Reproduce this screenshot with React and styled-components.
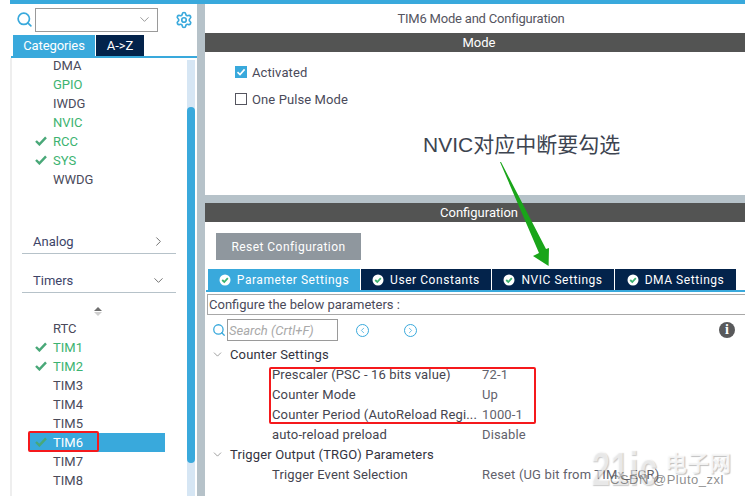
import React from 'react';
import styled, { createGlobalStyle } from 'styled-components';
import { Search, Settings, ChevronDown, ChevronRight, ChevronLeft } from 'lucide-react';

const blue = '#39a9dc';
const navy = '#03234b';
const steel = '#b6c2c9';
const green = '#3cb371';
const ink = '#4a4a5a';

const GlobalStyle = createGlobalStyle`
    html, body {
        margin: 0;
        padding: 0;
        background: #ffffff;
    }
    body {
        width: 745px;
        height: 496px;
        overflow: hidden;
        font-family: Roboto, "Liberation Sans", "Noto Sans CJK SC", sans-serif;
        font-size: 13px;
        color: ${ink};
    }
`;

const Page = styled.div`
    position: relative;
    width: 745px;
    height: 496px;
    overflow: hidden;
    padding-left: 10px;
    box-sizing: border-box;
`;

const TopBar = styled.div`
    height: 4px;
    background: ${blue};
`;

const Columns = styled.div`
    display: flex;
    height: 492px;
`;

const Sidebar = styled.aside`
    width: 187px;
    flex: none;
    display: flex;
    flex-direction: column;
`;

const SearchRow = styled.div`
    display: flex;
    align-items: center;
    height: 31px;
    padding-left: 6px;
    box-sizing: border-box;
    color: ${blue};
`;

const Combo = styled.div`
    width: 123px;
    height: 24px;
    margin-left: 2px;
    box-sizing: border-box;
    border: 1px solid #9a9a9a;
    display: flex;
    align-items: center;
    justify-content: flex-end;
    padding-right: 5px;
    color: #8c8c8c;
`;

const GearSlot = styled.div`
    margin-left: 17px;
    display: flex;
`;

const Tabs = styled.div`
    display: flex;
    gap: ${(p) => p.$gap}px;
    padding-left: ${(p) => p.$inset}px;
    border-bottom: 2px solid ${blue};
    margin-left: 1px;
`;

const SideTab = styled.div`
    height: 21px;
    width: ${(p) => p.$width}px;
    display: flex;
    align-items: center;
    justify-content: center;
    background: ${(p) => (p.$active ? blue : navy)};
    color: #ffffff;
    font-size: 13px;
    letter-spacing: -0.1px;
`;

const SideBody = styled.div`
    flex: 1;
    display: flex;
    min-height: 0;
    border-left: 2px solid #eeeeee;
`;

const SideList = styled.div`
    flex: 1;
    overflow: hidden;
`;

const Scrollbar = styled.div`
    position: relative;
    width: 8px;
    margin: 2px 2px 0 0;
    background: #d6e6f4;
`;

const ScrollThumb = styled.div`
    position: absolute;
    top: 47px;
    left: 0;
    right: 0;
    height: 356px;
    background: ${blue};
    border-radius: 4px;
`;

const ItemGroup = styled.div`
    padding-left: 18px;
    margin-top: ${(p) => p.$top || 0}px;
`;

const Item = styled.div`
    position: relative;
    height: 19px;
    width: 135px;
    display: flex;
    align-items: center;
    padding-left: 23px;
    box-sizing: border-box;
    font-size: 13px;
    color: ${(p) => (p.$selected ? '#ffffff' : p.$on ? green : ink)};
    background: ${(p) => (p.$selected ? blue : 'transparent')};
`;

const ItemCheck = styled.svg`
    position: absolute;
    left: 5px;
    top: 4px;
    width: 12px;
    height: 10px;
`;

const RedMark = styled.div`
    position: absolute;
    left: -2px;
    top: -2px;
    width: 71px;
    height: 21px;
    box-sizing: border-box;
    border: 2.5px solid #f5191c;
    border-radius: 2px;
`;

const Section = styled.div`
    display: flex;
    align-items: center;
    justify-content: space-between;
    width: 154px;
    height: 21px;
    box-sizing: border-box;
    margin: ${(p) => p.$top}px 0 0 10px;
    padding: 0 10px 3px 11px;
    border-bottom: 1px solid ${steel};
    font-size: 13px;
    color: #3d4468;
`;

const SortArrows = styled.div`
    width: 135px;
    height: 16px;
    margin: 10px 0 0 18px;
    display: flex;
    flex-direction: column;
    align-items: center;
    justify-content: center;
    gap: 1px;
    &::before, &::after {
        content: '';
        width: 0;
        height: 0;
        border-left: 4px solid transparent;
        border-right: 4px solid transparent;
    }
    &::before { border-bottom: 4px solid #6f6f6f; }
    &::after { border-top: 4px solid #cfcfcf; }
`;

const Gutter = styled.div`
    width: 8px;
    flex: none;
    background: ${steel};
`;

const Main = styled.main`
    flex: none;
    width: 548px;
    display: flex;
    flex-direction: column;
    background: ${steel};
`;

const Pane = styled.section`
    background: #ffffff;
    height: ${(p) => p.$height}px;
    margin-bottom: ${(p) => p.$gap || 0}px;
    flex: ${(p) => (p.$grow ? 1 : 'none')};
`;

const PaneTitle = styled.div`
    height: 29px;
    display: flex;
    align-items: center;
    justify-content: center;
    padding-left: 4px;
    font-size: 13px;
    letter-spacing: -0.2px;
    color: #55555f;
`;

const Band = styled.div`
    height: 19px;
    display: flex;
    align-items: center;
    justify-content: center;
    background: #535453;
    color: #ffffff;
    font-size: 13px;
`;

const CheckRows = styled.div`
    display: flex;
    flex-direction: column;
    gap: 15px;
    padding: 14px 0 0 30px;
`;

const CheckRow = styled.label`
    display: flex;
    align-items: center;
    gap: 5px;
    height: 12px;
    font-size: 13px;
    letter-spacing: 0.1px;
`;

const Box = styled.span`
    width: 12px;
    height: 12px;
    box-sizing: border-box;
    display: flex;
    background: ${(p) => (p.$on ? blue : '#ffffff')};
    border: ${(p) => (p.$on ? 'none' : '1px solid #55555f')};
`;

const ResetButton = styled.button`
    display: block;
    width: 145px;
    height: 27px;
    margin: 11px 0 9px 11px;
    padding: 0;
    border: none;
    background: #8f979e;
    color: #ffffff;
    font: inherit;
    font-size: 12px;
    letter-spacing: 0.45px;
`;

const ConfigTabs = styled.div`
    display: flex;
    gap: 1px;
    padding-left: 2px;
    border-bottom: 2px solid ${blue};
    margin-left: 1px;
`;

const ConfigTab = styled.div`
    height: 21px;
    width: ${(p) => p.$width}px;
    display: flex;
    align-items: center;
    justify-content: center;
    gap: 6px;
    background: ${(p) => (p.$active ? blue : navy)};
    color: #ffffff;
    font-size: 12px;
    letter-spacing: 0.55px;
`;

const Hint = styled.div`
    height: 21px;
    margin: 2px 0 0 2px;
    padding-left: 1px;
    box-sizing: border-box;
    border: 1px solid #a8a8a8;
    border-right: none;
    display: flex;
    align-items: center;
    font-size: 13px;
`;

const Tools = styled.div`
    display: flex;
    align-items: center;
    height: 22px;
    margin-top: 4px;
    padding-left: 7px;
    color: ${blue};
`;

const SearchField = styled.div`
    width: 111px;
    height: 22px;
    margin-left: 1px;
    box-sizing: border-box;
    border: 1px solid #9a9a9a;
    padding-left: 1px;
    display: flex;
    align-items: center;
    font-style: italic;
    font-size: 13px;
    color: #a9a9a9;
`;

const RoundNav = styled.span`
    width: 13px;
    height: 13px;
    box-sizing: border-box;
    margin-left: ${(p) => p.$left}px;
    border: 1px solid ${blue};
    border-radius: 50%;
    display: flex;
    align-items: center;
    justify-content: center;
`;

const InfoDot = styled.span`
    width: 16px;
    height: 16px;
    margin-left: 302px;
    border-radius: 50%;
    background: #58595b;
    color: #ffffff;
    font-family: "Liberation Serif", serif;
    font-weight: bold;
    font-size: 14px;
    display: flex;
    align-items: center;
    justify-content: center;
`;

const Tree = styled.div`
    padding-top: 3px;
    font-size: 13px;
    letter-spacing: 0.15px;
`;

const TreeHead = styled.div`
    height: 20px;
    display: flex;
    align-items: center;
    gap: 6px;
    padding-left: 6px;
    color: #333340;
`;

const ParamRow = styled.div`
    height: 20px;
    display: grid;
    grid-template-columns: 210px 1fr;
    align-items: center;
    padding-left: 67px;
    white-space: nowrap;
    color: #45454f;
`;

const ParamValue = styled.span`
    color: #62626c;
`;

const RedGroup = styled.div`
    position: relative;
    &::after {
        content: '';
        position: absolute;
        left: 64px;
        top: 3px;
        width: 267px;
        height: 57px;
        box-sizing: border-box;
        border: 2.5px solid #f5191c;
        border-radius: 2px;
    }
`;

const Note = styled.div`
    position: absolute;
    left: 423px;
    top: 131px;
    font-family: "Liberation Sans", "Noto Sans CJK SC", sans-serif;
    font-size: 21px;
    line-height: 28px;
    color: #3d4450;
    white-space: nowrap;
`;

const Arrow = styled.svg`
    position: absolute;
    left: 490px;
    top: 155px;
    width: 70px;
    height: 120px;
`;

const LogoMark = styled.div`
    position: absolute;
    left: 591px;
    top: 444px;
    font-family: "Liberation Sans", sans-serif;
    font-weight: 700;
    font-size: 34px;
    line-height: 34px;
    color: rgba(255, 255, 255, 0.6);
    text-shadow: 1px 1px 1px rgba(0, 0, 0, 0.22);
    transform: scaleY(1.4);
    transform-origin: top left;
`;

const LogoName = styled.div`
    position: absolute;
    left: 665px;
    top: 447px;
    font-family: "Noto Sans CJK SC", sans-serif;
    font-weight: 700;
    font-size: 22px;
    line-height: 28px;
    color: rgba(255, 255, 255, 0.8);
    text-shadow: 1px 1px 1px rgba(0, 0, 0, 0.25);
    white-space: nowrap;
`;

const Credit = styled.div`
    position: absolute;
    left: 610px;
    top: 472px;
    font-family: "Liberation Sans", sans-serif;
    font-size: 13px;
    line-height: 16px;
    letter-spacing: 0.5px;
    color: rgba(90, 90, 90, 0.7);
    white-space: nowrap;
`;

const Tick = () => (
    <svg width="12" height="12" viewBox="0 0 12 12">
        <path d="M2.5 6.2 5 8.6 9.6 3.4" fill="none" stroke="#ffffff" strokeWidth="1.6" />
    </svg>
);

const TabBadge = () => (
    <svg width="12" height="12" viewBox="0 0 12 12">
        <circle cx="6" cy="6" r="5.5" fill="#ffffff" />
        <path d="M3.2 6 5.3 8 8.8 4.2" fill="none" stroke="#3cb371" strokeWidth="1.8" />
    </svg>
);

const SideItem = ({ name, on, checked, selected, mark }) => (
    <Item $on={on} $selected={selected}>
        {checked && (
            <ItemCheck viewBox="0 0 12 10">
                <path d="M1 5 4.4 8.4 11 1.4" fill="none" stroke="#49a878" strokeWidth="2.4" />
            </ItemCheck>
        )}
        {name}
        {mark && <RedMark />}
    </Item>
);

const App = () => (
    <>
        <GlobalStyle />
        <Page>
            <TopBar />
            <Columns>
                <Sidebar>
                    <SearchRow>
                        <Search size={17} strokeWidth={2.4} />
                        <Combo>
                            <ChevronDown size={15} strokeWidth={1.4} />
                        </Combo>
                        <GearSlot>
                            <Settings size={18} strokeWidth={2.2} />
                        </GearSlot>
                    </SearchRow>
                    <Tabs $gap={1} $inset={2}>
                        <SideTab $active $width={82}>Categories</SideTab>
                        <SideTab $width={48}>A-&gt;Z</SideTab>
                    </Tabs>
                    <SideBody>
                        <SideList>
                            <ItemGroup $top={-2}>
                                <SideItem name="DMA" />
                                <SideItem name="GPIO" on />
                                <SideItem name="IWDG" />
                                <SideItem name="NVIC" on />
                                <SideItem name="RCC" on checked />
                                <SideItem name="SYS" on checked />
                                <SideItem name="WWDG" />
                            </ItemGroup>
                            <Section $top={44}>
                                Analog
                                <ChevronRight size={15} strokeWidth={1.5} color="#6a6a6a" />
                            </Section>
                            <Section $top={18}>
                                Timers
                                <ChevronDown size={15} strokeWidth={1.5} color="#6a6a6a" />
                            </Section>
                            <SortArrows />
                            <ItemGroup>
                                <SideItem name="RTC" />
                                <SideItem name="TIM1" on checked />
                                <SideItem name="TIM2" on checked />
                                <SideItem name="TIM3" />
                                <SideItem name="TIM4" />
                                <SideItem name="TIM5" />
                                <SideItem name="TIM6" checked selected mark />
                                <SideItem name="TIM7" />
                                <SideItem name="TIM8" />
                            </ItemGroup>
                        </SideList>
                        <Scrollbar>
                            <ScrollThumb />
                        </Scrollbar>
                    </SideBody>
                </Sidebar>
                <Gutter />
                <Main>
                    <Pane $height={191} $gap={8}>
                        <PaneTitle>TIM6 Mode and Configuration</PaneTitle>
                        <Band>Mode</Band>
                        <CheckRows>
                            <CheckRow>
                                <Box $on><Tick /></Box>
                                Activated
                            </CheckRow>
                            <CheckRow>
                                <Box />
                                One Pulse Mode
                            </CheckRow>
                        </CheckRows>
                    </Pane>
                    <Pane $grow>
                        <Band>Configuration</Band>
                        <ResetButton>Reset Configuration</ResetButton>
                        <ConfigTabs>
                            <ConfigTab $active $width={152}><TabBadge />Parameter Settings</ConfigTab>
                            <ConfigTab $width={130}><TabBadge />User Constants</ConfigTab>
                            <ConfigTab $width={122}><TabBadge />NVIC Settings</ConfigTab>
                            <ConfigTab $width={121}><TabBadge />DMA Settings</ConfigTab>
                        </ConfigTabs>
                        <Hint>Configure the below parameters :</Hint>
                        <Tools>
                            <Search size={14} strokeWidth={2.2} />
                            <SearchField>Search (Crtl+F)</SearchField>
                            <RoundNav $left={18}><ChevronLeft size={9} strokeWidth={2} /></RoundNav>
                            <RoundNav $left={35}><ChevronRight size={9} strokeWidth={2} /></RoundNav>
                            <InfoDot>i</InfoDot>
                        </Tools>
                        <Tree>
                            <TreeHead>
                                <ChevronDown size={13} strokeWidth={1.3} color="#777777" />
                                Counter Settings
                            </TreeHead>
                            <RedGroup>
                                <ParamRow>Prescaler (PSC - 16 bits value)<ParamValue>72-1</ParamValue></ParamRow>
                                <ParamRow>Counter Mode<ParamValue>Up</ParamValue></ParamRow>
                                <ParamRow>Counter Period (AutoReload Regi...<ParamValue>1000-1</ParamValue></ParamRow>
                            </RedGroup>
                            <ParamRow>auto-reload preload<ParamValue>Disable</ParamValue></ParamRow>
                            <TreeHead>
                                <ChevronDown size={13} strokeWidth={1.3} color="#777777" />
                                Trigger Output (TRGO) Parameters
                            </TreeHead>
                            <ParamRow>Trigger Event Selection<ParamValue>Reset (UG bit from TIMx_EGR)</ParamValue></ParamRow>
                        </Tree>
                    </Pane>
                </Main>
            </Columns>
            <Note>NVIC对应中断要勾选</Note>
            <Arrow viewBox="0 0 70 120">
                <path d="M10 7 11 7 56 94 59 93 58.6 111 43 101 49 98Z" fill="#1aa51a" />
            </Arrow>
            <LogoMark>21ic</LogoMark>
            <LogoName>电子网</LogoName>
            <Credit>CSDN @Pluto_zxl</Credit>
        </Page>
    </>
);

export default App;
